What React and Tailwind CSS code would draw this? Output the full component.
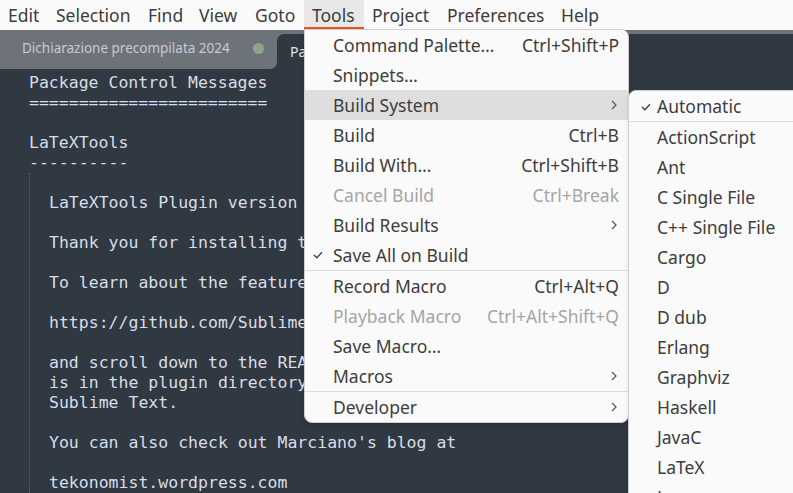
import React from 'react';

const menuBar = [
  { label: 'Edit', w: 'w-[48px]' },
  { label: 'Selection', w: 'w-[92px]' },
  { label: 'Find', w: 'w-[51px]' },
  { label: 'View', w: 'w-[56px]' },
  { label: 'Goto', w: 'w-[57px]' },
  { label: 'Tools', w: 'w-[60px]', active: true },
  { label: 'Project', w: 'w-[75px]' },
  { label: 'Preferences', w: 'w-[114px]' },
  { label: 'Help', w: 'w-[54px]' },
];

const toolsItems = [
  { label: 'Command Palette…', key: 'Ctrl+Shift+P' },
  { label: 'Snippets…' },
  { label: 'Build System', sub: true, hover: true },
  { label: 'Build', key: 'Ctrl+B' },
  { label: 'Build With…', key: 'Ctrl+Shift+B' },
  { label: 'Cancel Build', key: 'Ctrl+Break', disabled: true },
  { label: 'Build Results', sub: true },
  { label: 'Save All on Build', checked: true },
  { sep: true },
  { label: 'Record Macro', key: 'Ctrl+Alt+Q' },
  { label: 'Playback Macro', key: 'Ctrl+Alt+Shift+Q', disabled: true },
  { label: 'Save Macro…' },
  { label: 'Macros', sub: true },
  { sep: true },
  { label: 'Developer', sub: true },
];

const buildSystems = [
  'ActionScript', 'Ant', 'C Single File', 'C++ Single File', 'Cargo', 'D', 'D dub',
  'Erlang', 'Graphviz', 'Haskell', 'JavaC', 'LaTeX', 'Lua',
];

const editorTop = [
  'Package Control Messages',
  '========================',
  '',
  'LaTeXTools',
  '----------',
];

// only the part left of the menu is visible
const editorIndented = [
  '',
  'LaTeXTools Plugin version',
  '',
  'Thank you for installing t',
  '',
  'To learn about the feature',
  '',
  'https://github.com/Sublime',
  '',
  'and scroll down to the REA',
  'is in the plugin directory',
  'Sublime Text.',
  '',
  "You can also check out Marciano's blog at",
  '',
  'tekonomist.wordpress.com',
];

const Check = () => (
  <svg width="10" height="8" viewBox="0 0 10 8" className="text-[#3d3d3d]">
    <polyline points="1,4 3.8,6.8 9,1.2" fill="none" stroke="currentColor" strokeWidth="1.3" />
  </svg>
);

const Chevron = () => (
  <svg width="6" height="10" viewBox="0 0 6 10" className="text-[#555]">
    <polyline points="1,1 5,5 1,9" fill="none" stroke="currentColor" strokeWidth="1.2" />
  </svg>
);

const App = () => {
  return (
    <div className="relative w-[793px] h-[493px] overflow-hidden bg-[#303841] font-['Noto_Sans',sans-serif]">
      {/* menu bar */}
      <div className="flex h-[30px] bg-[#fafafa] text-[#3c3c3c] text-[17.5px] whitespace-nowrap">
        {menuBar.map((m) => (
          <div
            key={m.label}
            className={`${m.w} pl-2 flex items-center h-full ${m.active ? 'bg-[#e8e8e8] border-b-[3px] border-[#e95420] pt-[3px]' : ''}`}
          >
            {m.label}
          </div>
        ))}
      </div>

      {/* tab bar */}
      <div className="flex h-[39px] bg-[#303841]">
        <div className="w-[277px] bg-[#6e7279] rounded-br-[7px] flex items-center pl-[22px] pb-[2px] text-[13.5px] text-[#c9cbce] whitespace-nowrap">
          <span>Dichiarazione precompilata 2024</span>
          <span className="ml-auto mr-[13px] w-[11px] h-[11px] rounded-full bg-[#8ea68a]" />
        </div>
        <div className="flex-1 bg-[#6e7279] pt-[4px]">
          <div className="h-full bg-[#303841] rounded-tl-[7px] pl-[13px] pt-[7px] text-[14px] text-[#e2e5e9] whitespace-nowrap">
            Pa
          </div>
        </div>
      </div>

      {/* editor */}
      <div className="pt-[4px] pl-[29px] font-['DejaVu_Sans_Mono',monospace] text-[16.5px] leading-[20px] text-[#d8dee9] whitespace-pre">
        {editorTop.map((l, i) => (
          <div key={i} className="h-[20px]">{l}</div>
        ))}
        <div className="border-l border-dotted border-[#5d6570] pl-[19px]">
          {editorIndented.map((l, i) => (
            <div key={i} className="h-[20px]">{l}</div>
          ))}
        </div>
      </div>

      {/* Tools menu */}
      <div className="absolute left-[304px] top-[29px] w-[325px] bg-[#fafafa] border border-[#cfcfcf] rounded-tr-[8px] rounded-b-[8px] shadow-md text-[17.5px] text-[#3d3d3d] whitespace-nowrap">
        {toolsItems.map((it, i) =>
          it.sep ? (
            <div key={i} className="h-px bg-[#dcdcdc]" />
          ) : (
            <div
              key={i}
              className={`relative flex items-center h-[30px] pl-[28px] pr-[9px] ${it.hover ? 'bg-[#dedede]' : ''} ${it.disabled ? 'text-[#a5a5a5]' : ''}`}
            >
              {it.checked && (
                <span className="absolute left-[8px] top-[11px]"><Check /></span>
              )}
              <span className="flex-1">{it.label}</span>
              {it.key && <span>{it.key}</span>}
              {it.sub && <span className="pr-[2px]"><Chevron /></span>}
            </div>
          )
        )}
      </div>

      {/* Build System submenu */}
      <div className="absolute left-[628px] top-[90px] w-[180px] bg-[#fafafa] border border-[#cfcfcf] rounded-tl-[8px] shadow-md text-[17.5px] text-[#3d3d3d] whitespace-nowrap">
        <div className="relative flex items-center h-[30px] pl-[28px]">
          <span className="absolute left-[12px] top-[12px]"><Check /></span>
          Automatic
        </div>
        <div className="h-px bg-[#dcdcdc]" />
        {buildSystems.map((b) => (
          <div key={b} className="flex items-center h-[30px] pl-[28px]">{b}</div>
        ))}
      </div>
    </div>
  );
};

export default App;
